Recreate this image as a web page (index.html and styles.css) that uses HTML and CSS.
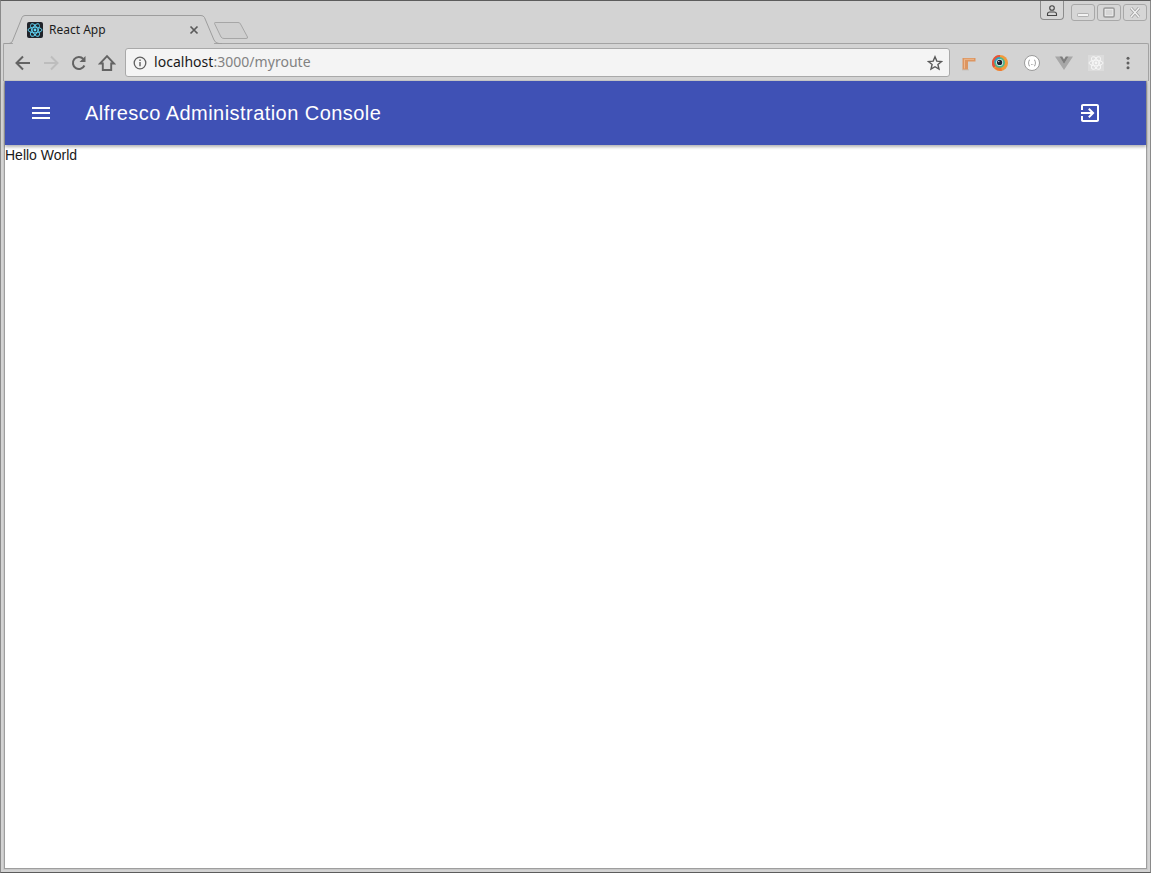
FILE: index.html
```html
<!DOCTYPE html>
<html lang="en">
<head>
<meta charset="utf-8">
<title>React App</title>
<link rel="stylesheet" href="styles.css">
</head>
<body>
<div class="window">
  <header class="tabstrip">
    <svg class="tab-shape" width="260" height="46" viewBox="0 0 260 46">
      <path d="M12 46L22 17.500Q22.800 15.500 25 15.500H201Q203.500 15.500 204.500 17.500L215 46Z" fill="#d3d3d3"/>
      <path d="M3.500 43.500H9Q11.500 43.500 12.500 41L22 17.500Q22.800 15.500 25 15.500H201Q203.500 15.500 204.500 17.500L214 40Q215.500 43.500 219 43.500H222" fill="none" stroke="#9d9d9d"/>
      <path d="M214.500 23.500Q214 22.500 216 22.500H238Q240 22.500 240.500 24L247.500 37Q248 38.500 246 38.500H224Q222 38.500 221 37Z" fill="#cfcfcf" stroke="#a6a6a6"/>
    </svg>
    <div class="tab">
      <svg class="favicon" width="16" height="16" viewBox="0 0 16 16">
        <rect width="16" height="16" rx="2" fill="#20232a"/>
        <g fill="none" stroke="#61dafb" stroke-width=".9">
          <ellipse cx="8" cy="8" rx="7" ry="2.800"/>
          <ellipse cx="8" cy="8" rx="7" ry="2.800" transform="rotate(60 8 8)"/>
          <ellipse cx="8" cy="8" rx="7" ry="2.800" transform="rotate(120 8 8)"/>
        </g>
        <circle cx="8" cy="8" r="1.400" fill="#61dafb"/>
      </svg>
      <span class="tab-title">React App</span>
      <svg class="tab-close" width="10" height="10" viewBox="0 0 10 10"><path d="M1.500 1.500l7 7M8.500 1.500l-7 7" stroke="#5a5a5a" stroke-width="1.700"/></svg>
    </div>
    <div class="window-controls">
      <div class="ctl ctl-user">
        <svg width="12" height="11" viewBox="0 0 12 11"><circle cx="6" cy="3" r="2.300" fill="none" stroke="#444" stroke-width="1.100"/><path d="M1.500 10.500V9Q1.500 7 4 7H8Q10.500 7 10.500 9V10.500Z" fill="none" stroke="#444" stroke-width="1.100"/></svg>
      </div>
      <div class="ctl">
        <svg width="12" height="11" viewBox="0 0 12 11"><rect x=".5" y="6.500" width="11" height="3" rx=".8" fill="#f2f2f2" stroke="#a3a3a3" stroke-width=".8"/></svg>
      </div>
      <div class="ctl">
        <svg width="12" height="11" viewBox="0 0 12 11"><rect x=".8" y="1" width="10.400" height="9" rx="1.500" fill="none" stroke="#9a9a9a" stroke-width="1.500"/><rect x="2.200" y="2.400" width="7.600" height="6.200" fill="none" stroke="#efefef" stroke-width=".7"/></svg>
      </div>
      <div class="ctl">
        <svg width="12" height="11" viewBox="0 0 12 11"><path d="M2 1l8 9M10 1l-8 9" stroke="#a0a0a0" stroke-width="3"/><path d="M2 1l8 9M10 1l-8 9" stroke="#f2f2f2" stroke-width="1.400"/></svg>
      </div>
    </div>
  </header>

  <nav class="toolbar">
    <button class="nav-btn"><svg width="18" height="18" viewBox="0 0 18 18"><path d="M16 9H3M9 2.500L2.500 9 9 15.500" fill="none" stroke="#636363" stroke-width="2"/></svg></button>
    <button class="nav-btn"><svg width="18" height="18" viewBox="0 0 18 18"><path d="M2 9H15M9 2.500L15.500 9 9 15.500" fill="none" stroke="#bdbdbd" stroke-width="2"/></svg></button>
    <button class="nav-btn"><svg width="18" height="18" viewBox="0 0 18 18"><path d="M14.400 11.500A6 6 0 1 1 13.300 4.900" fill="none" stroke="#636363" stroke-width="2"/><path d="M15.500 2V8H9.500Z" fill="#636363"/></svg></button>
    <button class="nav-btn"><svg width="18" height="18" viewBox="0 0 18 18"><path d="M9 2.200L2 9.500H4.800V16H13.200V9.500H16Z" fill="none" stroke="#636363" stroke-width="1.900" stroke-linejoin="miter"/></svg></button>
    <div class="omnibox">
      <svg class="info" width="14" height="14" viewBox="0 0 14 14"><circle cx="7" cy="7" r="5.800" fill="none" stroke="#5f5f5f" stroke-width="1.300"/><path d="M6.300 6h1.400v4.300H6.300zM6.300 3.500h1.400v1.400H6.300z" fill="#5f5f5f"/></svg>
      <span class="url"><span class="host">localhost</span>:3000/myroute</span>
      <svg class="star" width="16" height="16" viewBox="0 0 16 16"><path d="M8 1.800l1.800 4.300 4.700.4-3.600 3 1.100 4.600L8 11.700l-4 2.400 1.100-4.600-3.600-3 4.700-.4z" fill="none" stroke="#5a5a5a" stroke-width="1.400"/></svg>
    </div>
    <div class="extensions">
      <span class="ext"><svg width="16" height="16" viewBox="0 0 16 16"><path d="M2 14.800H9" stroke="#c6c1bb" stroke-width="1.200"/><path d="M2.500 3H15.500V6.500H8V14.500H2.500Z" fill="#dd9560"/><path d="M4 4.300H14" stroke="#eeb88e"/><path d="M4.500 5V13.500" stroke="#eeb88e"/></svg></span>
      <span class="ext"><svg width="16" height="16" viewBox="0 0 16 16"><circle cx="8" cy="8" r="8" fill="#f2993a"/><path d="M8 0A8 8 0 0 0 1.500 12.700L8 8Z" fill="#e4523c"/><path d="M8 8L2.800 13.500A8 8 0 0 0 10 15.700Z" fill="#ef7a35"/><circle cx="7.600" cy="7.400" r="5.300" fill="#4db58c"/><path d="M7.600 2.100A5.300 5.300 0 0 0 2.300 7.400L7.600 7.400Z" fill="#2f9fc4"/><circle cx="7.600" cy="7.400" r="3.500" fill="#d9e8ec"/><circle cx="7.600" cy="7.400" r="2.600" fill="#1b2230"/><circle cx="6.800" cy="6.600" r=".7" fill="#fff"/></svg></span>
      <span class="ext"><svg width="16" height="16" viewBox="0 0 16 16"><circle cx="8" cy="8" r="7.500" fill="#fff" stroke="#9a9a9a"/><path d="M6 5Q4.800 5 4.800 6.200V7.400L4 8 4.800 8.600V9.800Q4.800 11 6 11M10 5Q11.200 5 11.200 6.200V7.400L12 8 11.200 8.600V9.800Q11.200 11 10 11" fill="none" stroke="#888" stroke-width=".8"/><path d="M7 9.500h.6M8.600 9.500h.6" stroke="#888"/></svg></span>
      <span class="ext"><svg width="18" height="16" viewBox="0 0 18 16"><path d="M0 1.500H4.500L9 9 13.500 1.500H18L9 15Z" fill="#a8a8a8"/><path d="M4.500 1.500H7.200L9 4.500 10.800 1.500H13.500L9 9Z" fill="#7d7d7d"/></svg></span>
      <span class="ext"><svg width="16" height="16" viewBox="0 0 16 16"><rect width="16" height="16" fill="#dcdcdc"/><g fill="none" stroke="#f6f6f6" stroke-width="1"><ellipse cx="8" cy="8" rx="7" ry="2.800"/><ellipse cx="8" cy="8" rx="7" ry="2.800" transform="rotate(60 8 8)"/><ellipse cx="8" cy="8" rx="7" ry="2.800" transform="rotate(120 8 8)"/></g><circle cx="8" cy="8" r="1.400" fill="#f6f6f6"/></svg></span>
    </div>
    <button class="menu-btn"><svg width="4" height="14" viewBox="0 0 4 14"><circle cx="2" cy="2.200" r="1.500" fill="#5f5f5f"/><circle cx="2" cy="7" r="1.500" fill="#5f5f5f"/><circle cx="2" cy="11.800" r="1.500" fill="#5f5f5f"/></svg></button>
  </nav>

  <main class="viewport">
    <header class="appbar">
      <button class="icon-btn menu-icon"><svg width="24" height="24" viewBox="0 0 24 24"><path d="M3 18h18v-2H3v2zm0-5h18v-2H3v2zm0-7v2h18V6H3z" fill="#fff"/></svg></button>
      <h1 class="app-title">Alfresco Administration Console</h1>
      <button class="icon-btn logout-icon"><svg width="24" height="24" viewBox="0 0 24 24"><path d="M10.090 15.590L11.500 17l5-5-5-5-1.410 1.410L12.670 11H3v2h9.670l-2.580 2.590zM19 3H5c-1.110 0-2 .9-2 2v4h2V5h14v14H5v-4H3v4c0 1.100.89 2 2 2h14c1.100 0 2-.9 2-2V5c0-1.100-.9-2-2-2z" fill="#fff"/></svg></button>
    </header>
    <div class="content">Hello World</div>
  </main>
</div>
</body>
</html>
```

FILE: styles.css
```css
* { box-sizing: border-box; }
html, body { margin: 0; height: 100%; overflow: hidden; }
button { border: 0; padding: 0; background: none; display: flex; align-items: center; justify-content: center; }

.window {
  width: 1151px;
  height: 873px;
  display: flex;
  flex-direction: column;
  background: #d3d3d3;
  border-top: 1px solid #5c5c5c;
  border-left: 1px solid #8a8a8a;
  border-right: 1px solid #8a8a8a;
  border-bottom: 1px solid #5c5c5c;
  position: relative;
}

.tabstrip {
  height: 42px;
  flex: none;
  position: relative;
  z-index: 1;
  display: flex;
  align-items: flex-start;
  justify-content: space-between;
}
.tab-shape { position: absolute; left: -1px; top: -1px; }
.tab {
  position: relative;
  margin: 20px 0 0 26px;
  width: 172px;
  height: 18px;
  display: flex;
  align-items: center;
}
.favicon { flex: none; }
.tab-title {
  margin-left: 6px;
  font: 12px/18px "Noto Sans", sans-serif;
  color: #1c1c1c;
  flex: 1;
}
.tab-close { flex: none; }

.window-controls {
  display: flex;
  gap: 2px;
  position: relative;
  margin-right: 3px;
  margin-top: 3px;
}
.ctl {
  width: 24px;
  height: 17px;
  border: 1px solid #a8a8a8;
  border-radius: 3px;
  display: flex;
  align-items: center;
  justify-content: center;
  background: #d6d6d6;
}
.ctl-user {
  margin-top: -3px;
  height: 19px;
  margin-right: 5px;
  border-color: #8c8c8c;
  border-top: 0;
  border-radius: 0 0 4px 4px;
}

.toolbar {
  height: 38px;
  flex: none;
  display: flex;
  align-items: center;
  padding-left: 5px;
  margin: 0 1px 0 2px;
  border-top: 1px solid #a3a3a3;
  border-left: 1px solid #a3a3a3;
  border-right: 1px solid #a3a3a3;
  border-radius: 2px 2px 0 0;
  position: relative;
}
.nav-btn { width: 28px; height: 28px; }
.omnibox {
  width: 825px;
  height: 29px;
  margin-left: 4px;
  background: #f4f4f4;
  border: 1px solid #a9a9a9;
  border-radius: 3px;
  display: flex;
  align-items: center;
  padding: 0 6px 0 7px;
}
.info { flex: none; }
.url {
  margin-left: 7px;
  margin-bottom: 2px;
  flex: 1;
  font: 14px "Noto Sans", sans-serif;
  letter-spacing: .03px;
  color: #828282;
}
.host { color: #1a1a1a; }
.star { flex: none; }
.extensions {
  display: flex;
  align-items: center;
  margin-left: 2px;
}
.ext { width: 32px; display: flex; justify-content: center; }
.menu-btn { width: 32px; height: 28px; }

.viewport {
  flex: 1;
  margin: 0 3px 3px 3px;
  background: #fff;
  border: 1px solid #9e9e9e;
  border-top: 0;
  box-shadow: 0 0 0 1px #c8c8c8;
  min-height: 0;
}
.appbar {
  height: 64px;
  background: #3f51b5;
  display: flex;
  align-items: center;
  color: #fff;
  box-shadow: 0 2px 3px rgba(0,0,0,.3);
  padding: 0 44px 0 24px;
}
.icon-btn { width: 24px; height: 24px; flex: none; }
.app-title {
  margin: 0 0 0 32px;
  flex: 1;
  font: 400 20px/24px "Liberation Sans", Arial, sans-serif;
  letter-spacing: .45px;
}
.content {
  font: 14px/20px "Liberation Sans", Arial, sans-serif;
  color: #1a1a1a;
}
```
